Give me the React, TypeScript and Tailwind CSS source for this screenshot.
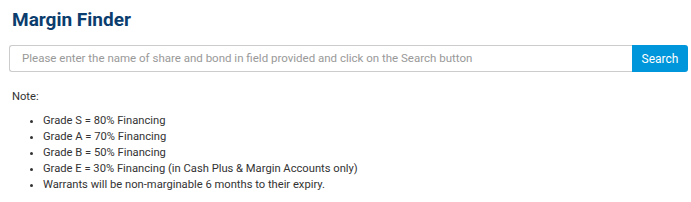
import React from 'react'

const notes = [
  'Grade S = 80% Financing',
  'Grade A = 70% Financing',
  'Grade B = 50% Financing',
  'Grade E = 30% Financing (in Cash Plus & Margin Accounts only)',
  'Warrants will be non-marginable 6 months to their expiry.',
]

export default function App() {
  return (
    <div className="w-[691px] h-[202px] bg-white px-[9px] pt-[6px] font-['Roboto',sans-serif] text-[#333]">
      <h1 className="pl-[3px] text-[19px] leading-[28px] font-bold text-[#0b3d6e]">Margin Finder</h1>
      <div className="mt-[11px] flex w-[679px] h-[27px]">
        <input
          className="flex-1 min-w-0 border border-[#ccc] border-r-0 rounded-l-[3px] px-[12px] text-[11.5px] text-[#555] placeholder:text-[#999] outline-none"
          placeholder="Please enter the name of share and bond in field provided and click on the Search button"
        />
        <button className="w-[56px] bg-[#0096db] text-white text-[12px] rounded-r-[3px]">Search</button>
      </div>
      <p className="mt-[17px] pl-[3px] text-[11.2px] leading-[16px]">Note:</p>
      <ul className="mt-[8px] pl-[34px] list-disc text-[11.2px] leading-[16px]">
        {notes.map((n) => (
          <li key={n}>{n}</li>
        ))}
      </ul>
    </div>
  )
}
